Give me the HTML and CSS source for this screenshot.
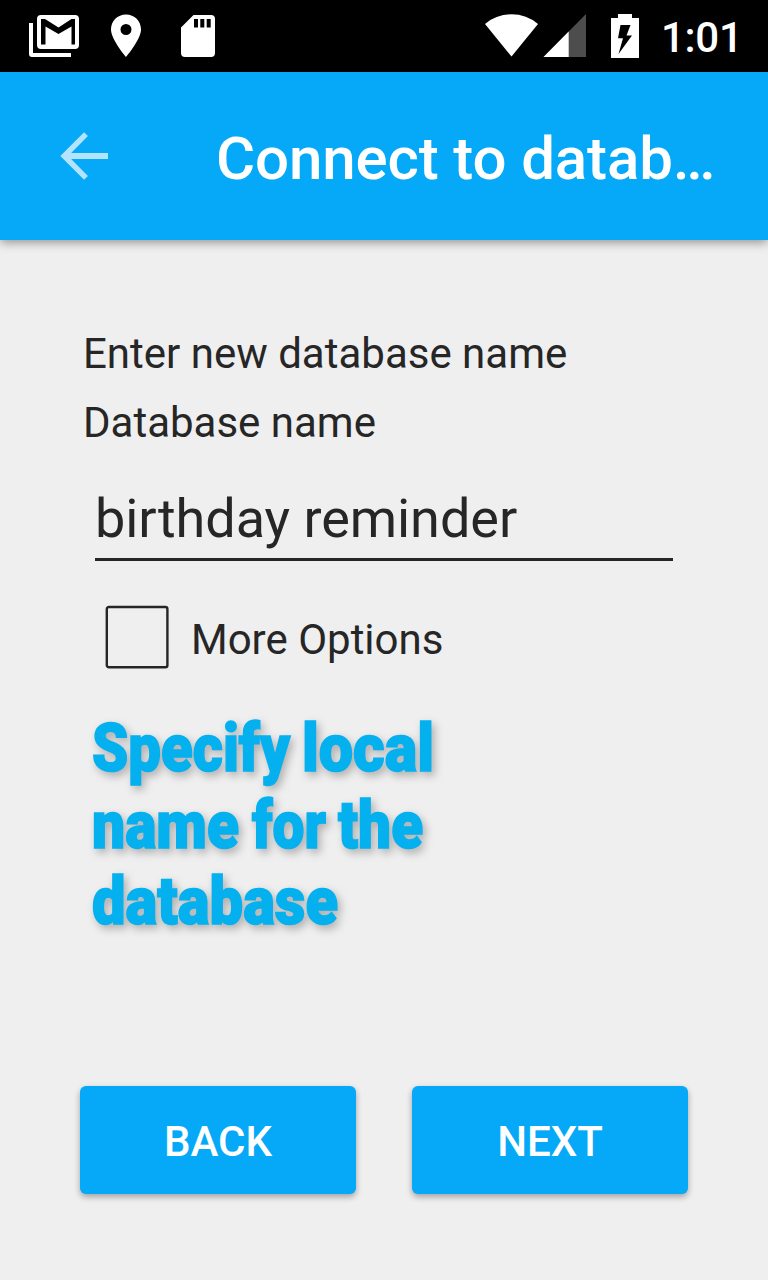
FILE: index.html
```html
<!DOCTYPE html>
<html lang="en">
<head>
<meta charset="utf-8">
<title>Connect to database</title>
<link rel="stylesheet" href="styles.css">
</head>
<body>
<div class="screen">
  <div class="status">
    <svg class="status-left" width="216" height="72" viewBox="0 0 216 72" fill="#fff">
      <path d="M29 23h4v30h38v4H32q-3 0-3-3z"/>
      <path fill-rule="evenodd" d="M41 15h34q4 0 4 4v26q0 4-4 4H41q-4 0-4-4V19q0-4 4-4zM41 19v25.500h4.500V26.500L58.500 34l13-7.500v18H75V19h-3.500L58.500 27.500 45 19z"/>
      <path fill-rule="evenodd" d="M126 14.500c8.500 0 15 6.500 15 15C141 39.500 126 57 126 57s-15-17.500-15-27.500c0-8.500 6.500-15 15-15zm0 9.500a5.500 5.500 0 1 0 0 11 5.500 5.500 0 0 0 0-11z"/>
      <path fill-rule="evenodd" d="M193.500 15H211q4 0 4 4v34q0 4-4 4h-26q-4 0-4-4V27.500zM194 19v8.500h4V19zM200.300 19v8.500h4V19zM206.700 19v8.500h4V19z"/>
    </svg>
    <div class="status-right">
      <svg width="156" height="72" viewBox="484 0 156 72" fill="#fff">
        <path d="M485 24q11.500-9.700 26.500-9.700T538 24L511.500 56.500z"/>
        <path fill="#4d4d4d" d="M586 14v43h-42.500z"/>
        <path d="M568.700 31.500V57H543.500z"/>
        <path fill-rule="evenodd" d="M618 14h14v4h7v40h-28V18h7zM620.500 25l-2.500 13.300h5L618.500 54 632 35.500h-5.500L630.500 25z"/>
      </svg>
      <span class="clock">1:01</span>
    </div>
  </div>
  <header class="appbar">
    <svg class="back-arrow" width="48" height="48" viewBox="0 0 48 48" fill="none" stroke="#b3e4fd"><path stroke-width="6" d="M48 24H6"/><path stroke-width="5.500" d="M26 2.100L4.200 24 26 45.900"/></svg>
    <h1 class="title">Connect to datab…</h1>
  </header>
  <main class="content">
    <p class="label">Enter new database name</p>
    <p class="label">Database name</p>
    <div class="field">birthday reminder</div>
    <div class="option">
      <svg class="checkbox" width="64" height="64" viewBox="0 0 64 64"><rect x="1.800" y="2" width="60.600" height="60.200" rx="2" fill="none" stroke="#262626" stroke-width="2.400"/></svg>
      <span>More Options</span>
    </div>
    <svg class="caption" width="380" height="240" viewBox="0 0 380 240">
      <text y="71"><tspan x="12" textLength="198" lengthAdjust="spacingAndGlyphs">Specify</tspan> <tspan x="222" textLength="132" lengthAdjust="spacingAndGlyphs">local</tspan></text>
      <text y="147.500"><tspan x="12" textLength="147" lengthAdjust="spacingAndGlyphs">name</tspan> <tspan x="172" textLength="74" lengthAdjust="spacingAndGlyphs">for</tspan> <tspan x="258" textLength="85" lengthAdjust="spacingAndGlyphs">the</tspan></text>
      <text y="224"><tspan x="12" textLength="246" lengthAdjust="spacingAndGlyphs">database</tspan></text>
    </svg>
    <div class="actions">
      <div class="button">BACK</div>
      <div class="button">NEXT</div>
    </div>
  </main>
</div>
</body>
</html>
```
FILE: styles.css
```css
* { box-sizing: border-box; }
body { margin: 0; background: #efefef; font-family: Roboto, sans-serif; color: #262626; }
.screen { width: 768px; height: 1280px; overflow: hidden; display: flex; flex-direction: column; background: #efefef; }
.status { flex: none; height: 72px; background: #000; display: flex; justify-content: space-between; }
.status svg { display: block; }
.status-right { display: flex; width: 284px; gap: 21px; }
.clock { color: #fff; font-size: 42px; font-weight: 500; line-height: 76px; letter-spacing: -.3px; white-space: nowrap; }
.appbar { flex: none; height: 168px; background: #05a9f7; display: flex; align-items: center; padding-left: 60px; gap: 108px; box-shadow: 0 2px 10px rgba(0, 0, 0, .42); }
.back-arrow { flex: none; }
.title { margin: 5px 0 0; color: #fff; font-size: 60px; font-weight: 500; line-height: 70px; letter-spacing: -.13px; white-space: nowrap; }
.content { padding: 79px 80px 0; display: flex; flex-direction: column; }
.label { margin: 0 0 0 3px; font-size: 42px; line-height: 69px; white-space: nowrap; }
.field { width: 578px; height: 84px; margin: 20px 0 0 15px; padding-top: 9px; font-size: 54px; line-height: 66px; letter-spacing: -.05px; border-bottom: 3px solid #262626; white-space: nowrap; }
.option { height: 64px; margin: 44px 0 0 25px; display: flex; gap: 22px; font-size: 42px; line-height: 69px; white-space: nowrap; }
.checkbox { flex: none; display: block; }
.caption { display: block; margin-top: 31px; overflow: visible; font-family: Roboto, sans-serif; font-size: 66px; font-weight: 900; fill: #05b0ef; stroke: #05b0ef; stroke-width: 1.600px; filter: drop-shadow(3px 4px 4px rgba(0, 0, 0, .27)); }
.actions { display: flex; gap: 56px; margin-top: 146px; }
.button { width: 276px; height: 108px; padding-top: 3px; border-radius: 6px; background: #05a9f7; color: #fff; font-size: 42px; font-weight: 500; line-height: 105px; text-align: center; box-shadow: 0 3px 6px rgba(0, 0, 0, .32); }
```
